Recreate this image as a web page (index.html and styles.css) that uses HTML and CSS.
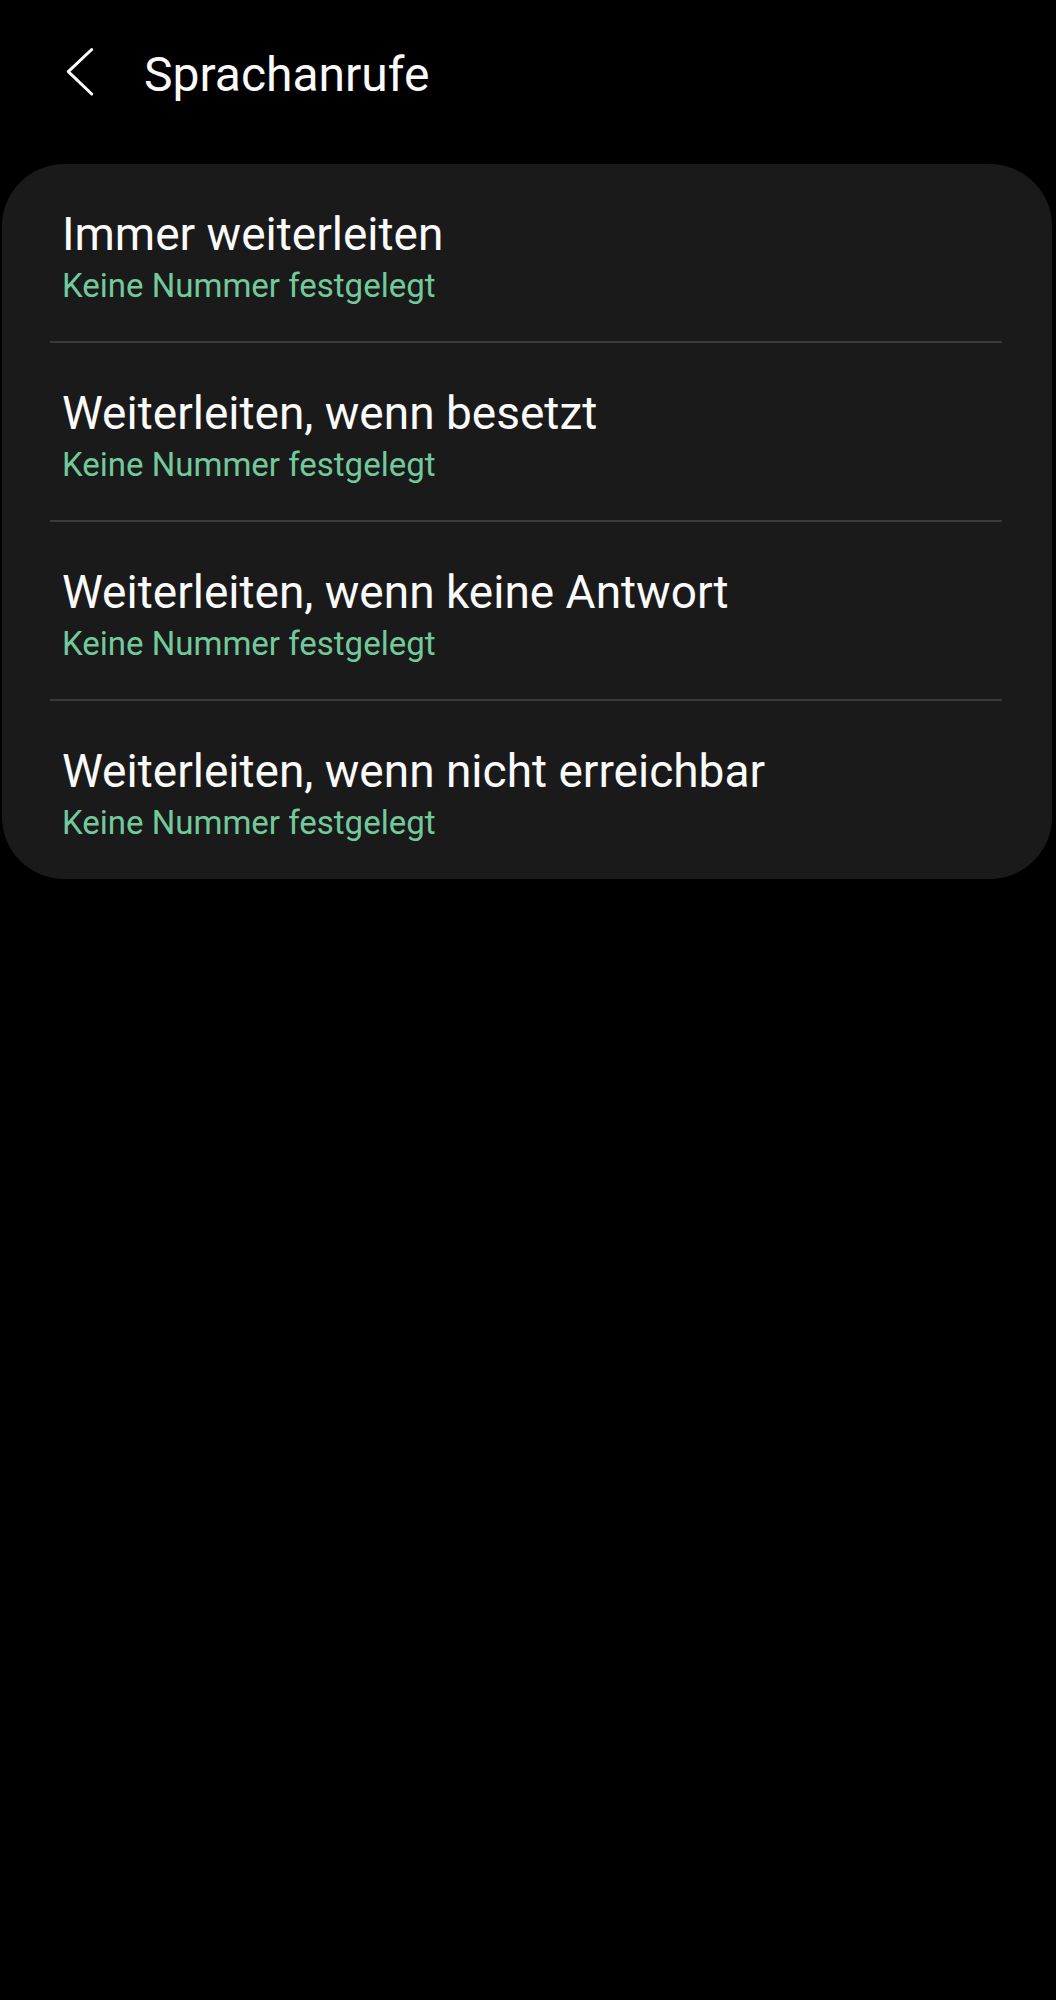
FILE: index.html
```
<!DOCTYPE html>
<html lang="de">
<head>
<meta charset="utf-8">
<title>Sprachanrufe</title>
<link rel="stylesheet" href="styles.css">
</head>
<body>
<header class="appbar">
  <svg class="back" width="40" height="56" viewBox="0 0 40 56" aria-hidden="true">
    <polyline points="31.7,2.5 8.3,24.7 31.7,47" fill="none" stroke="#ffffff" stroke-width="3" stroke-linecap="round" stroke-linejoin="round"/>
  </svg>
  <h1 class="title">Sprachanrufe</h1>
</header>
<main class="card">
  <div class="row">
    <div class="row-title">Immer weiterleiten</div>
    <div class="row-sub">Keine Nummer festgelegt</div>
  </div>
  <div class="divider"></div>
  <div class="row">
    <div class="row-title">Weiterleiten, wenn besetzt</div>
    <div class="row-sub">Keine Nummer festgelegt</div>
  </div>
  <div class="divider"></div>
  <div class="row">
    <div class="row-title">Weiterleiten, wenn keine Antwort</div>
    <div class="row-sub">Keine Nummer festgelegt</div>
  </div>
  <div class="divider"></div>
  <div class="row">
    <div class="row-title">Weiterleiten, wenn nicht erreichbar</div>
    <div class="row-sub">Keine Nummer festgelegt</div>
  </div>
</main>
</body>
</html>
```
FILE: styles.css
```
html, body {
  margin: 0;
  padding: 0;
  background: #000000;
}
body {
  font-family: Roboto, "Liberation Sans", sans-serif;
  color: #fafafa;
  min-height: 2000px;
}
.appbar {
  display: flex;
  align-items: flex-start;
  padding: 47px 0 0 60px;
  height: 56px;
}
.back {
  display: block;
  flex: none;
}
.title {
  margin: 0 0 0 44px;
  font-size: 48px;
  font-weight: 400;
  line-height: 56px;
  color: #fafafa;
}
.card {
  margin: 61px 4px 0 2px;
  background: #1a1a1a;
  border-radius: 62px;
}
.row {
  padding: 44px 20px 35px 60px;
}
.row:last-child {
  padding-bottom: 36px;
}
.row-title {
  font-size: 46px;
  line-height: 52px;
  color: #fafafa;
}
.row-sub {
  margin-top: 6px;
  font-size: 33px;
  line-height: 40px;
  color: #72c99b;
}
.divider {
  height: 2px;
  margin: 0 50px 0 48px;
  background: #3a3a3a;
}
```
